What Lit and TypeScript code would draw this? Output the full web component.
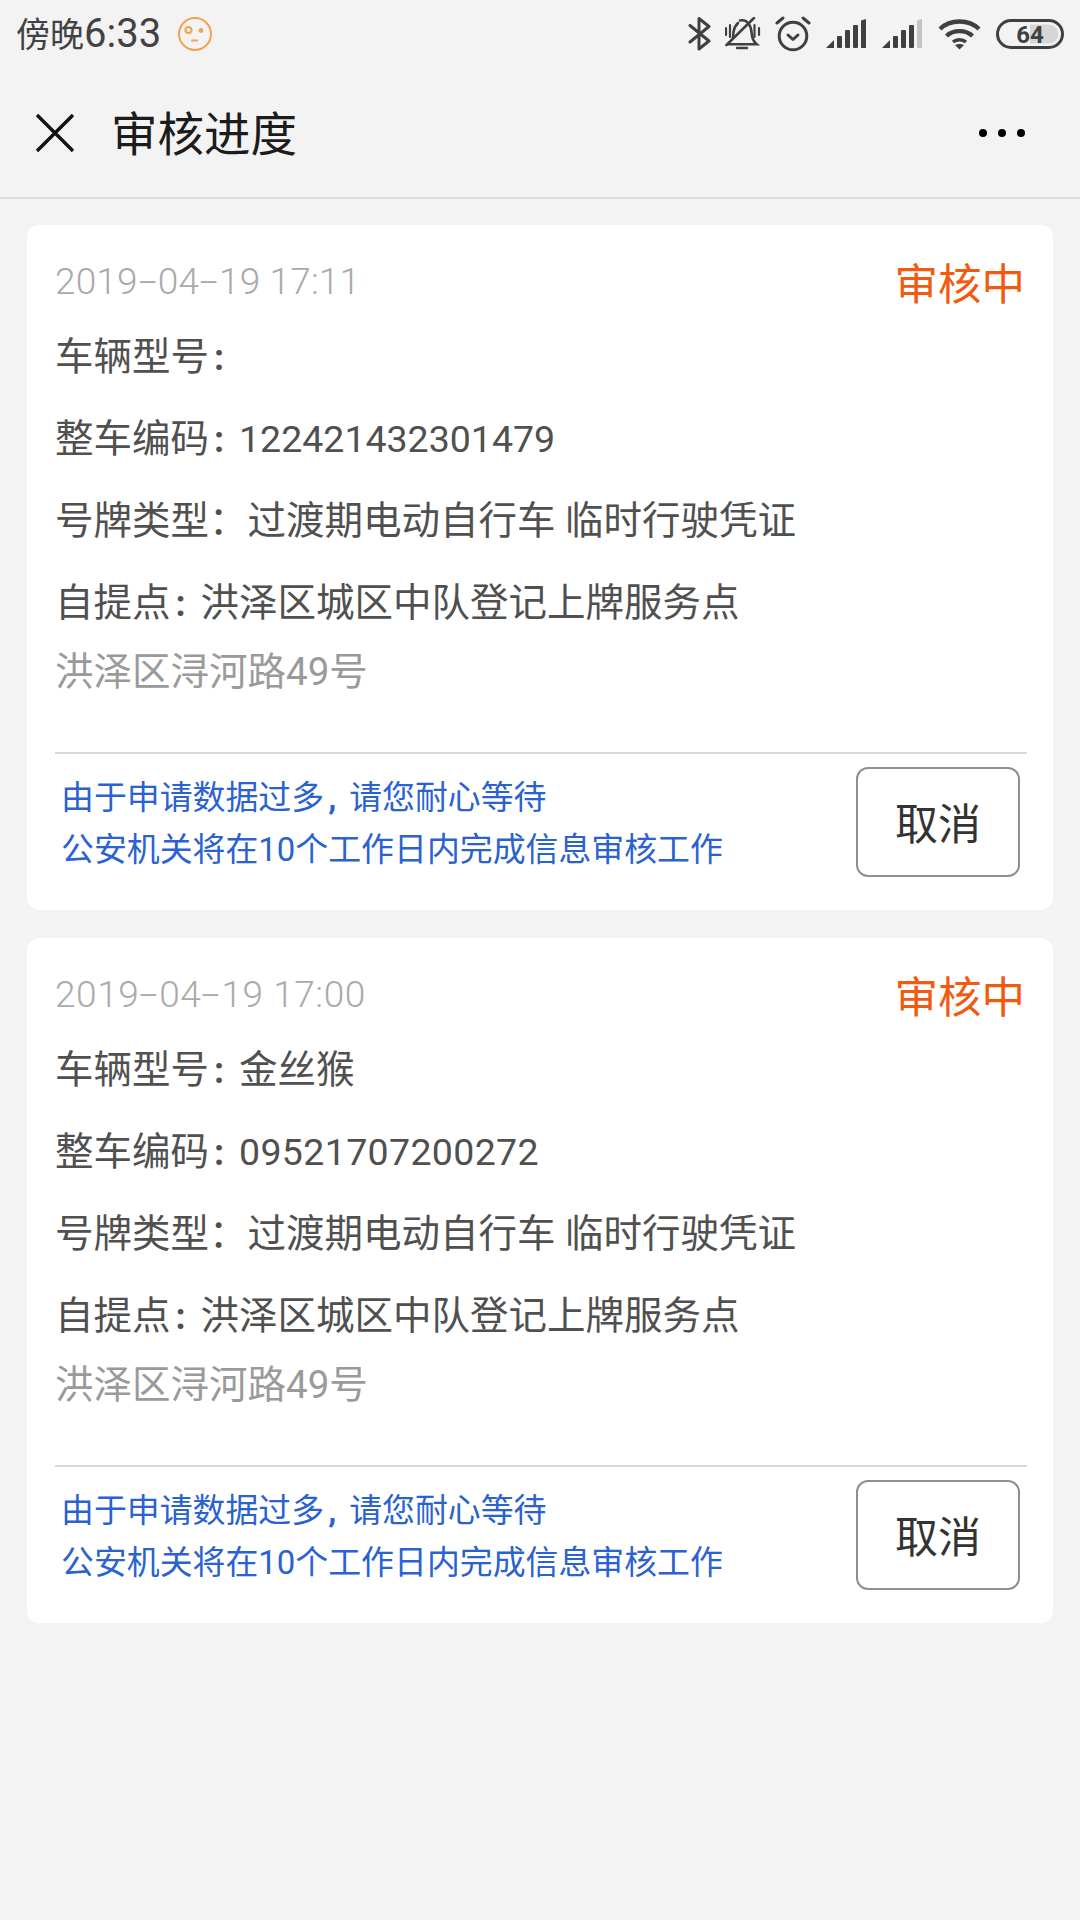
import { LitElement, html, css, svg } from "lit";
import { customElement } from "lit/decorators.js";
import { classMap } from "lit/directives/class-map.js";

const signal = (last: string) => svg`
  <path d="M0 29 L8 21 V29 Z" fill="#404040"/>
  <rect x="11" y="17" width="5" height="12" rx="1" fill="#404040"/>
  <rect x="19" y="11" width="5" height="18" rx="1" fill="#404040"/>
  <rect x="27" y="6" width="5" height="23" rx="1" fill="#404040"/>
  <path d="M35 1.5 L40 0 V29 H35 Z" fill="${last}"/>`;

interface Item { date: [string, string, string]; time: string; model: string; code: string; wide: boolean; }
const items: Item[] = [
  { date: ["2019", "04", "19"], time: "17:11", model: "", code: "122421432301479", wide: false },
  { date: ["2019", "04", "19"], time: "17:00", model: "金丝猴", code: "09521707200272", wide: true },
];

@customElement("app-root")
export class AppRoot extends LitElement {
  static styles = css`
    :host {
      display: block;
      width: 1080px;
      min-height: 1920px;
      background: #f3f3f3;
      font-family: Roboto, "Noto Sans CJK SC", sans-serif;
      color: #505050;
    }
    .status { height: 68px; display: flex; align-items: center; padding: 0 16px; box-sizing: border-box; }
    .time { font-size: 34px; color: #424242; line-height: 68px; white-space: pre; }
    .time b { font-size: 40px; font-weight: 400; }
    .face { margin-left: 16px; }
    .icons { margin-left: auto; display: flex; align-items: center; }
    .icons svg { display: block; }
    .nav {
      height: 131px; box-sizing: border-box; border-bottom: 2px solid #dedede;
      display: flex; align-items: center; padding: 0 0 0 35px;
    }
    .title { margin-left: 36px; font-size: 46.5px; color: #1c1c1c; line-height: 60px; flex: 1; margin-top: 4px; }
    .more { margin-right: 54px; display: block; }
    .list { display: flex; flex-direction: column; gap: 28px; padding: 26px 27px 0; }
    .card { background: #fff; border-radius: 12px; height: 685px; padding: 0 26px 0 28px; box-sizing: border-box; }
    .head { height: 91px; display: flex; justify-content: space-between; box-sizing: border-box; padding-top: 29px; }
    .date { font-size: 37px; color: #aaaaaa; line-height: 56px; font-weight: 300; white-space: pre; letter-spacing: 0.15px; }
    .wide .date { letter-spacing: 0.55px; }
    .dash { display: inline-block; width: 20px; text-align: center; transform: scaleX(1.8); }
    .state { font-size: 43.5px; color: #f15a0f; line-height: 56px; margin-right: 2px; padding-top: 4px; }
    .row { height: 82px; line-height: 82px; font-size: 38.5px; white-space: pre; }
    .num { font-size: 37.5px; }
    .wide .num { letter-spacing: 0.35px; }
    .colon { font-weight: 700; display: inline-block; width: 30px; box-sizing: border-box; padding-left: 5px; font-size: 36px; }
    .addr { height: 56px; line-height: 56px; font-size: 38.5px; color: #9a9a9a; }
    .foot {
      margin-top: 52px; border-top: 2px solid #d8d8d8; height: 157px; box-sizing: border-box;
      display: flex; justify-content: space-between; align-items: flex-start; padding: 13px 6px 0 6px;
    }
    .tips { font-size: 32.9px; line-height: 52px; color: #2a62d0; padding-top: 5px; white-space: pre; }
    .comma { display: inline-block; width: 25px; font-weight: 700; padding-left: 4px; box-sizing: border-box; }
    .cancel {
      width: 164px; height: 110px; box-sizing: border-box; border: 2.5px solid #8f8f8f; border-radius: 12px;
      background: #fff; font: inherit; font-size: 43px; color: #333; padding: 0 0 3px; margin-right: 1px;
      display: flex; align-items: center; justify-content: center;
    }
  `;

  private card(i: Item) {
    return html`<div class=${classMap({ card: true, wide: i.wide })}>
      <div class="head">
        <span class="date">${i.date[0]}<span class="dash">-</span>${i.date[1]}<span class="dash">-</span>${i.date[2]} ${i.time}</span>
        <span class="state">审核中</span>
      </div>
      <div class="row">车辆型号<span class="colon">:</span>${i.model}</div>
      <div class="row">整车编码<span class="colon">:</span><span class="num">${i.code}</span></div>
      <div class="row">号牌类型：过渡期电动自行车 临时行驶凭证</div>
      <div class="row">自提点<span class="colon">:</span>洪泽区城区中队登记上牌服务点</div>
      <div class="addr">洪泽区浔河路49号</div>
      <div class="foot">
        <div class="tips"><div>由于申请数据过多<span class="comma">,</span>请您耐心等待</div><div>公安机关将在10个工作日内完成信息审核工作</div></div>
        <button class="cancel">取消</button>
      </div>
    </div>`;
  }

  render() {
    return html`
      <div class="status">
        <span class="time">傍晚<b>6:33</b></span>
        <svg class="face" width="36" height="36" viewBox="0 0 36 36" fill="none" stroke="#f2a253" stroke-width="2">
          <circle cx="18" cy="18" r="16"/>
          <circle cx="11.5" cy="14" r="3"/>
          <circle cx="24" cy="14.5" r="1.4" fill="#f2a253"/>
          <path d="M15 24.5h5" stroke-linecap="round"/>
        </svg>
        <div class="icons">
          <svg width="24" height="36" viewBox="0 0 24 36" fill="none" stroke="#404040" stroke-width="3" stroke-linejoin="round" stroke-linecap="round">
            <path d="M2 9.5 L21 25 L11 33 V2.5 L21 10.5 L2 26"/>
          </svg>
          <svg style="margin-left:13px" width="36" height="34" viewBox="0 0 36 34" fill="none" stroke="#404040" stroke-width="2.6" stroke-linecap="round">
            <path d="M15 3.5 C22 2 26 8 26.7 16.3 C27 21 29 25 31.7 27.3 H3.3"/>
            <path d="M8 21 L8.5 15 C9 11 11 8 13 6"/>
            <path d="M12 31 H22" stroke-width="2.4"/>
            <path d="M29 1 L1.5 28"/>
            <path d="M1 11 V18 M5 8 V20 M29.5 8 V20 M34 11 V18" stroke-width="2.2"/>
          </svg>
          <svg style="margin-left:14px" width="36" height="36" viewBox="0 0 36 36" fill="none" stroke="#404040" stroke-width="3" stroke-linecap="round" stroke-linejoin="round">
            <circle cx="18" cy="20" r="13.8"/>
            <path d="M13 19 L18 23.5 L23 19"/>
            <path d="M2 7 L8 2 M34 7 L28 2"/>
          </svg>
          <svg style="margin-left:15px" width="41" height="30" viewBox="0 0 41 30">${signal("#404040")}</svg>
          <svg style="margin-left:15px" width="41" height="30" viewBox="0 0 41 30">${signal("#c4c4c4")}</svg>
          <svg style="margin-left:15px" width="43" height="32" viewBox="0 0 43 32" fill="none" stroke="#404040" stroke-width="4.4">
            <path d="M2 11 C12 1 31 1 41 11"/>
            <path d="M8.5 18 C15 11.5 28 11.5 34.5 18"/>
            <path d="M15 24 C18.5 21 24.5 21 28 24" stroke-width="3.6"/>
            <path d="M21.5 31.5 L17 27 C19.5 25.5 23.5 25.5 26 27 Z" fill="#404040" stroke="none"/>
          </svg>
          <svg style="margin-left:15px" width="68" height="30" viewBox="0 0 68 30">
            <rect x="1.5" y="1.5" width="65" height="27" rx="13.5" fill="none" stroke="#404040" stroke-width="3"/>
            <path d="M34 5.5 H53 A9.5 9.5 0 0 1 53 24.5 H34 Z" fill="#d6d6d6"/>
            <text x="34" y="24" text-anchor="middle" font-family="Roboto, sans-serif" font-weight="700" font-size="24" fill="#404040">64</text>
          </svg>
        </div>
      </div>
      <div class="nav">
        <svg width="40" height="40" viewBox="0 0 40 40" fill="none" stroke="#111" stroke-width="3.4">
          <path d="M2 2 L38 38 M38 2 L2 38"/>
        </svg>
        <span class="title">审核进度</span>
        <svg class="more" width="48" height="10" viewBox="0 0 48 10" fill="#000">
          <circle cx="5" cy="5" r="4"/><circle cx="24" cy="5" r="4"/><circle cx="43" cy="5" r="4"/>
        </svg>
      </div>
      <div class="list">${items.map((i) => this.card(i))}</div>
    `;
  }
}
